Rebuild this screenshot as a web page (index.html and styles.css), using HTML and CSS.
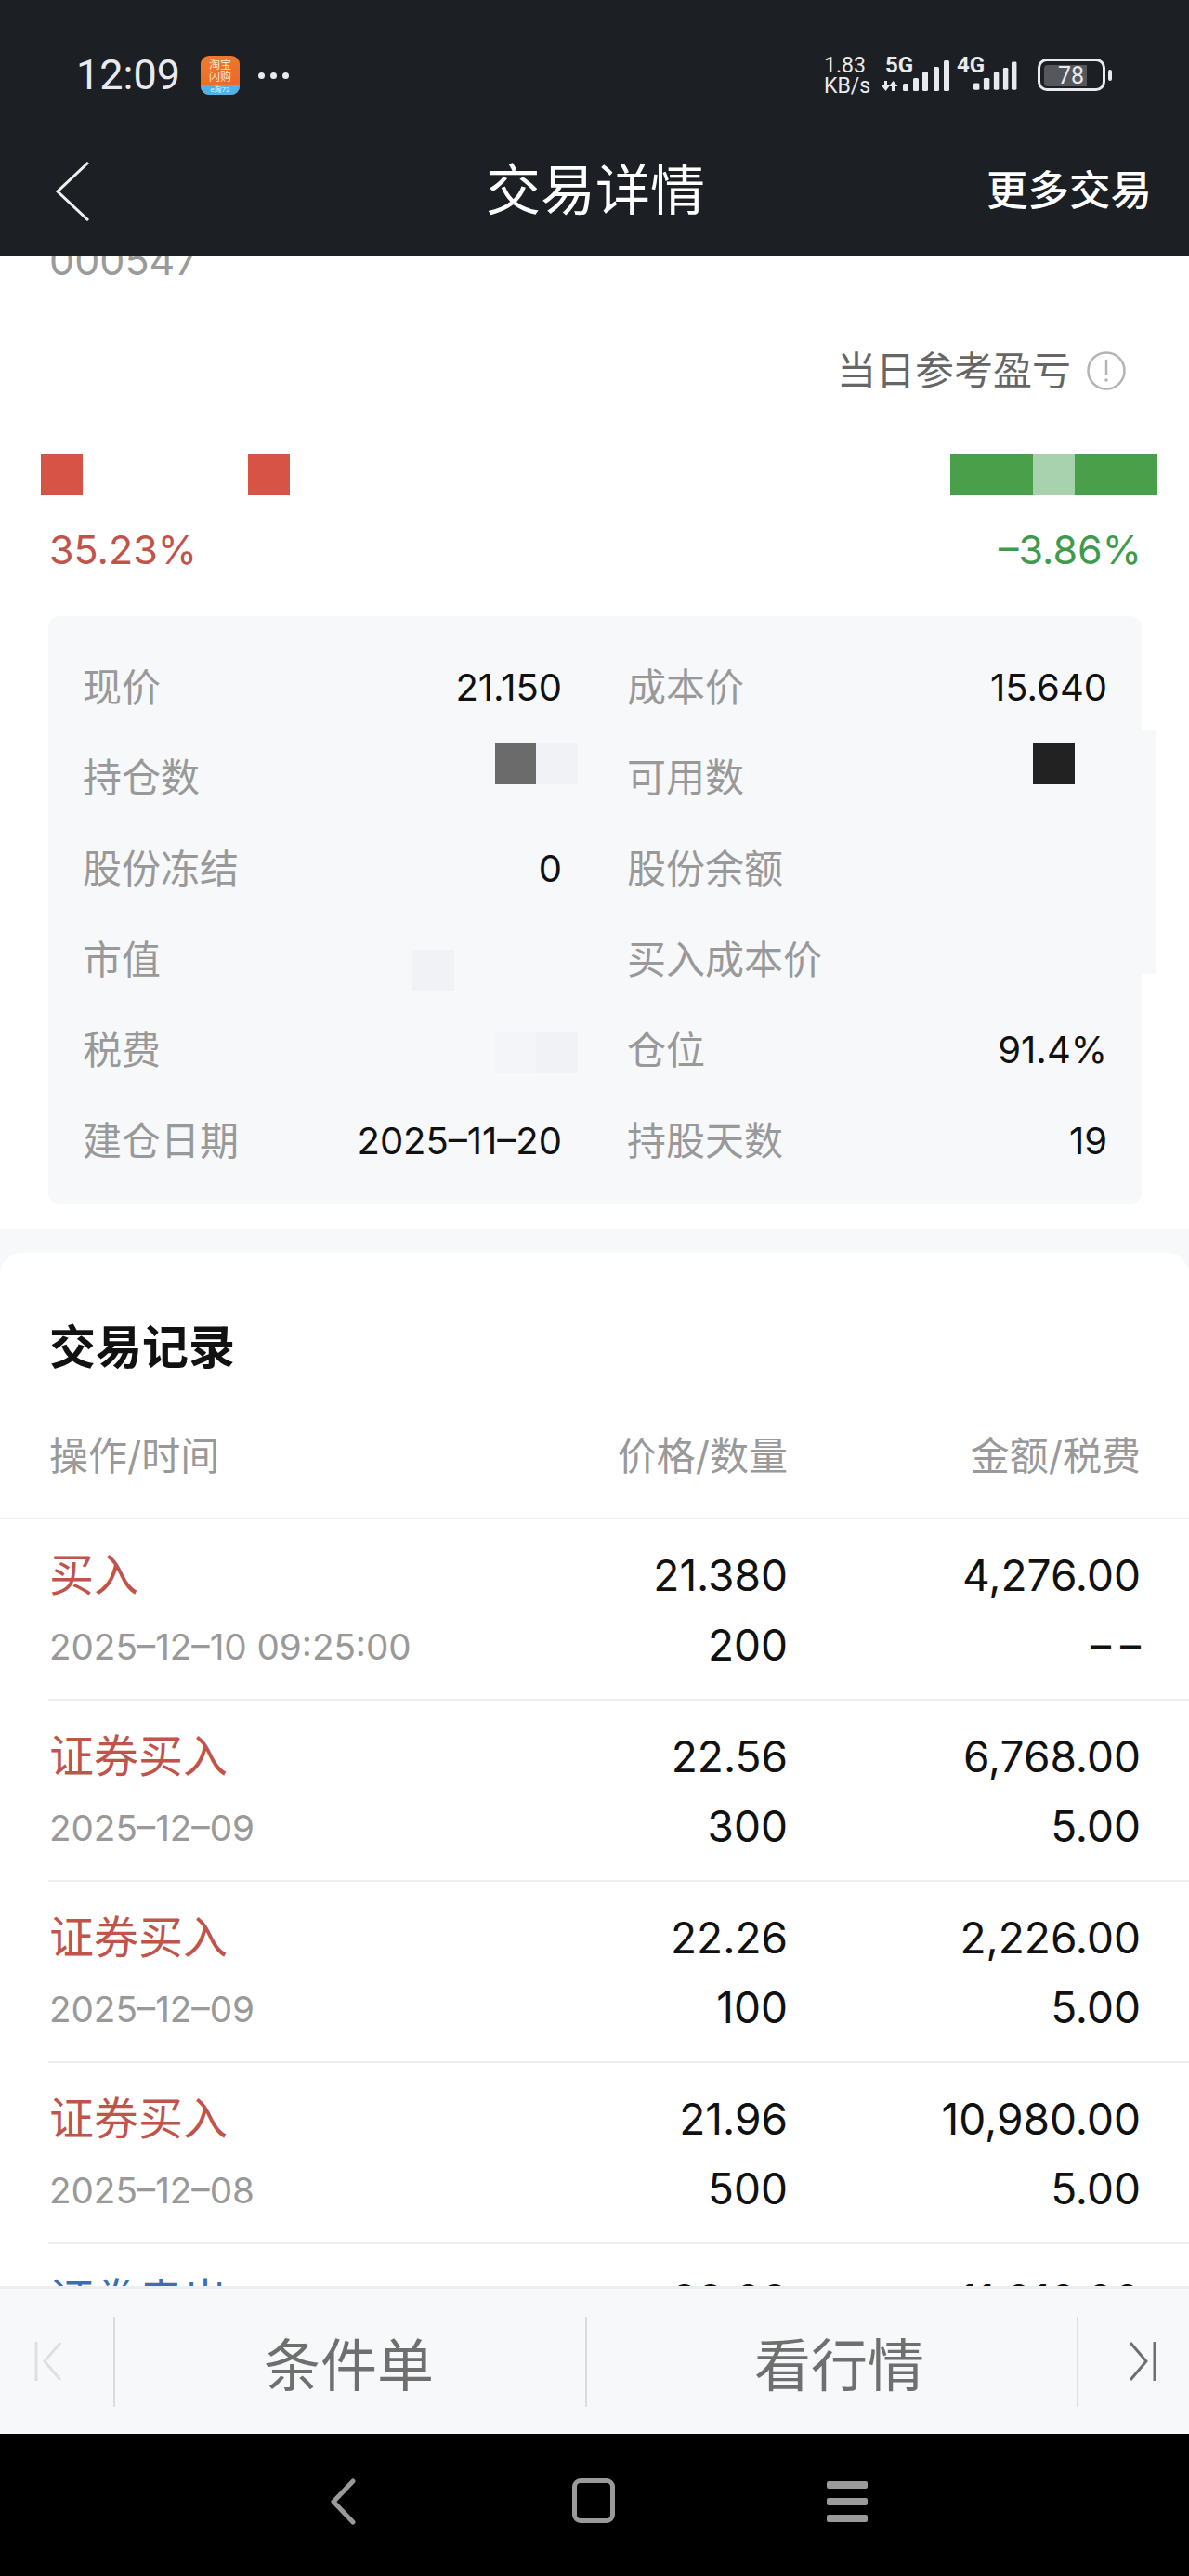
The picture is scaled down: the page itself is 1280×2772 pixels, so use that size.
FILE: index.html
```html
<!DOCTYPE html>
<html lang="zh-CN">
<head>
  <meta charset="UTF-8" />
  <meta name="viewport" content="width=device-width, initial-scale=1.0" />
  <title>交易详情</title>
  <link rel="stylesheet" href="styles.css">
</head>
<body>
  <header class="top-bar">
    <div class="status-bar">
      <span class="clock">12:09</span>
      <div class="app-badge">
        <div class="app-badge-name">淘宝<br />闪购</div>
        <div class="app-badge-foot">e淘72</div>
      </div>
      <div class="status-dots"><i></i><i></i><i></i></div>
      <div class="net-speed">1.83<br />KB/s</div>
      <div class="signal signal-5g">
        <span class="signal-name">5G</span>
        <svg width="75" height="36" viewBox="0 0 75 36">
          <path d="M3 22h3v5h3l-4.500 6L0 27h3zM11 33h3v-5h3.500l-5-6-4.500 6H11z" fill="#e8eaed" />
          <rect x="23" y="25" width="6" height="8" rx="1.5" fill="#e8eaed" />
          <rect x="34" y="19" width="6" height="14" rx="1.5" fill="#e8eaed" />
          <rect x="44" y="12" width="6" height="21" rx="1.5" fill="#e8eaed" />
          <rect x="56" y="7" width="6" height="26" rx="1.5" fill="#e8eaed" />
          <rect x="67" y="0" width="6" height="33" rx="1.5" fill="#e8eaed" />
        </svg>
      </div>
      <div class="signal signal-4g">
        <span class="signal-name">4G</span>
        <svg width="56" height="36" viewBox="0 0 56 36">
          <rect x="0" y="25" width="7" height="8" rx="1.5" fill="#e8eaed" />
          <rect x="12" y="19" width="7" height="14" rx="1.5" fill="#e8eaed" />
          <rect x="24" y="12" width="6" height="21" rx="1.5" fill="#e8eaed" />
          <rect x="35" y="7" width="6" height="26" rx="1.5" fill="#e8eaed" />
          <rect x="45" y="0" width="6" height="33" rx="1.5" fill="#e8eaed" />
        </svg>
      </div>
      <div class="battery">
        <div class="battery-body"><span class="battery-level">78</span></div>
        <div class="battery-tip"></div>
      </div>
    </div>
    <nav class="title-bar">
      <svg class="back-icon" width="37" height="64" viewBox="0 0 37 64">
        <path d="M35 1L2 32l33 31" fill="none" stroke="#f0f0f0" stroke-width="3" />
      </svg>
      <h1 class="page-title">交易详情</h1>
      <a class="more-link">更多交易</a>
    </nav>
  </header>

  <main class="scroll-area">
    <section class="summary">
      <div class="stock-code">000547</div>
      <div class="daily-ref">
        <span>当日参考盈亏</span>
        <svg width="42" height="42" viewBox="0 0 42 42">
          <circle cx="21" cy="21" r="19.5" fill="none" stroke="#b4b4b4" stroke-width="2.5" />
          <path d="M21 9v16" stroke="#b4b4b4" stroke-width="2.5" />
          <circle cx="21" cy="31" r="1.8" fill="#b4b4b4" />
        </svg>
      </div>
      <div class="mosaic-row">
        <div class="mosaic">
          <i class="cell cell-red"></i><i class="cell"></i><i class="cell"></i><i class="cell"></i><i class="cell"></i><i class="cell cell-red"></i>
        </div>
        <div class="mosaic">
          <i class="cell cell-green"></i><i class="cell cell-green"></i><i class="cell cell-pale"></i><i class="cell cell-green"></i><i class="cell cell-green"></i>
        </div>
      </div>
      <div class="percent-row">
        <span class="up">35.23%</span>
        <span class="down">–3.86%</span>
      </div>

      <div class="position-card">
        <div class="card-edge"></div>
        <div class="field"><span class="field-label">现价</span><span class="field-value">21.150</span></div>
        <div class="field"><span class="field-label">成本价</span><span class="field-value">15.640</span></div>
        <div class="field">
          <span class="field-label">持仓数</span>
          <span class="blur blur-qty"><i class="cell cell-grey"></i><i class="cell cell-faint"></i></span>
        </div>
        <div class="field">
          <span class="field-label">可用数</span>
          <span class="blur blur-avail"><i class="cell cell-dark"></i></span>
        </div>
        <div class="field"><span class="field-label">股份冻结</span><span class="field-value">0</span></div>
        <div class="field"><span class="field-label">股份余额</span></div>
        <div class="field">
          <span class="field-label">市值</span>
          <span class="blur blur-value"><i class="cell cell-faint"></i></span>
        </div>
        <div class="field"><span class="field-label">买入成本价</span></div>
        <div class="field">
          <span class="field-label">税费</span>
          <span class="blur blur-tax"><i class="cell cell-fainter"></i><i class="cell cell-faint"></i></span>
        </div>
        <div class="field"><span class="field-label">仓位</span><span class="field-value">91.4%</span></div>
        <div class="field"><span class="field-label">建仓日期</span><span class="field-value">2025–11–20</span></div>
        <div class="field"><span class="field-label">持股天数</span><span class="field-value">19</span></div>
      </div>
    </section>

    <section class="records">
      <h2 class="records-title">交易记录</h2>
      <div class="records-head">
        <span>操作/时间</span>
        <span class="num">价格/数量</span>
        <span class="num">金额/税费</span>
      </div>

      <div class="trade first">
        <span class="trade-type up">买入</span>
        <span class="num">21.380</span>
        <span class="num">4,276.00</span>
        <span class="trade-time">2025–12–10 09:25:00</span>
        <span class="num">200</span>
        <span class="num no-fee">––</span>
      </div>
      <div class="trade">
        <span class="trade-type up">证券买入</span>
        <span class="num">22.56</span>
        <span class="num">6,768.00</span>
        <span class="trade-time">2025–12–09</span>
        <span class="num">300</span>
        <span class="num">5.00</span>
      </div>
      <div class="trade">
        <span class="trade-type up">证券买入</span>
        <span class="num">22.26</span>
        <span class="num">2,226.00</span>
        <span class="trade-time">2025–12–09</span>
        <span class="num">100</span>
        <span class="num">5.00</span>
      </div>
      <div class="trade">
        <span class="trade-type up">证券买入</span>
        <span class="num">21.96</span>
        <span class="num">10,980.00</span>
        <span class="trade-time">2025–12–08</span>
        <span class="num">500</span>
        <span class="num">5.00</span>
      </div>
      <div class="trade">
        <span class="trade-type sell">证券卖出</span>
        <span class="num">22.02</span>
        <span class="num">11,010.00</span>
        <span class="trade-time">2025–12–08</span>
        <span class="num">500</span>
        <span class="num">5.00</span>
      </div>
    </section>
  </main>

  <div class="action-bar">
    <div class="action action-prev">
      <svg width="30" height="44" viewBox="0 0 30 44">
        <path d="M2 1v42" stroke="#dedfe2" stroke-width="3" />
        <path d="M28 2L11 22l17 20" fill="none" stroke="#dedfe2" stroke-width="3" />
      </svg>
    </div>
    <div class="action action-main action-order">条件单</div>
    <div class="action action-main action-quote">看行情</div>
    <div class="action action-next">
      <svg width="30" height="44" viewBox="0 0 30 44">
        <path d="M28 1v42" stroke="#6f6f6f" stroke-width="3" />
        <path d="M2 2l17 20L2 42" fill="none" stroke="#6f6f6f" stroke-width="3" />
      </svg>
    </div>
  </div>

  <footer class="system-nav">
    <svg class="sys-back" width="30" height="50" viewBox="0 0 30 50">
      <path d="M26 3L5 25l21 22" fill="none" stroke="#9a9a9a" stroke-width="5" stroke-linecap="round" stroke-linejoin="round" />
    </svg>
    <div class="sys-home"></div>
    <div class="sys-menu"><i></i><i></i><i></i></div>
  </footer>
</body>
</html>
```

FILE: styles.css
```css
* {
  box-sizing: border-box;
}
body {
  margin: 0;
  width: 1280px;
  height: 2772px;
  overflow: hidden;
  display: flex;
  flex-direction: column;
  background: #fff;
  color: #111;
  font-family: Inter, "Noto Sans CJK SC", sans-serif;
}
i {
  display: block;
}

/* top */
.top-bar {
  position: relative;
  z-index: 2;
  height: 275px;
  flex: none;
  background: #1c1f24;
  color: #e8eaed;
  font-family: Roboto, "Noto Sans CJK SC", sans-serif;
}
.status-bar {
  height: 150px;
  display: flex;
  align-items: flex-start;
  padding: 60px 0 0 82px;
}
.clock {
  width: 134px;
  font-size: 45px;
  line-height: 42px;
}
.app-badge {
  width: 42px;
  height: 42px;
  border-radius: 9px;
  overflow: hidden;
  background: linear-gradient(160deg, #ef7d2c, #e8622a);
  color: #fde6c8;
}
.app-badge-name {
  height: 31px;
  padding-top: 4px;
  font-size: 12px;
  line-height: 13px;
  text-align: center;
}
.app-badge-foot {
  height: 11px;
  border-top: 1px solid #fff;
  background: #4fb0ea;
  color: #e4f3fd;
  font-size: 8px;
  line-height: 10px;
  text-align: center;
}
.status-dots {
  display: flex;
  gap: 6px;
  margin: 18px 0 0 20px;
  width: 34px;
}
.status-dots i {
  width: 7px;
  height: 7px;
  border-radius: 50%;
  background: #e8eaed;
}
.net-speed {
  margin-left: 575px;
  width: 62px;
  font-size: 23px;
  line-height: 22px;
}
.signal {
  position: relative;
  display: flex;
}
.signal svg {
  display: block;
  margin-top: 5px;
}
.signal-5g {
  width: 81px;
  height: 42px;
}
.signal-4g {
  width: 69px;
  height: 42px;
  padding-left: 18px;
}
.signal-name {
  position: absolute;
  left: 4px;
  top: -1px;
  font-size: 24px;
  line-height: 22px;
  font-weight: 700;
}
.signal-4g .signal-name {
  left: 0;
}
.battery {
  display: flex;
  align-items: center;
  margin: 3px 0 0 18px;
}
.battery-body {
  width: 73px;
  height: 35px;
  padding: 4px;
  border: 3px solid #e8eaed;
  border-radius: 10px;
}
.battery-level {
  display: block;
  width: 46px;
  height: 23px;
  padding-right: 3px;
  background: #55575c;
  border-radius: 4px 0 0 4px;
  color: #e8eaed;
  font-size: 25px;
  line-height: 23px;
  text-align: right;
}
.battery-tip {
  width: 4px;
  height: 12px;
  margin-left: 3px;
  border-radius: 2px;
  background: #e8eaed;
}
.title-bar {
  height: 125px;
  display: grid;
  grid-template-columns: 1fr auto 1fr;
  align-items: center;
  padding: 0 40px 13px 42px;
  color: #fff;
}
.back-icon {
  display: block;
  margin-left: 18px;
}
.page-title {
  margin: 0;
  font-size: 59px;
  font-weight: 400;
  line-height: 70px;
}
.more-link {
  justify-self: end;
  font-size: 44.5px;
  font-weight: 500;
  line-height: 60px;
}

/* summary */
.scroll-area {
  flex: 1;
  min-height: 0;
  overflow: hidden;
  background: #f7f8fa;
}
.summary {
  height: 1047px;
  padding-top: 1px;
  background: #fff;
}
.stock-code {
  margin: -21px 0 0 53px;
  height: 50px;
  color: #9a9a9a;
  font-size: 43px;
  line-height: 50px;
}
.daily-ref {
  display: flex;
  justify-content: flex-end;
  align-items: center;
  gap: 17px;
  height: 50px;
  margin-top: 69px;
  padding-right: 68px;
  color: #666;
  font-size: 42px;
  line-height: 50px;
}
.daily-ref svg {
  display: block;
}
.mosaic-row {
  display: flex;
  justify-content: space-between;
  margin-top: 65px;
  padding: 0 34px 0 44px;
}
.mosaic {
  display: flex;
}
.cell {
  width: 44.6px;
  height: 44px;
}
.cell-red {
  background: #d65345;
}
.cell-green {
  background: #4a9f4a;
}
.cell-pale {
  background: #a8d2ae;
}
.cell-grey {
  background: #6b6b6b;
}
.cell-dark {
  background: #222;
}
.cell-faint {
  background: #f1f2f5;
}
.cell-fainter {
  background: #f4f5f8;
}
.percent-row {
  display: flex;
  justify-content: space-between;
  height: 40px;
  margin-top: 42px;
  padding: 0 51px 0 53px;
  overflow: hidden;
  font-size: 43px;
  line-height: 32px;
}
.up {
  color: #c0544a;
}
.down {
  color: #3f9a4e;
}
.sell {
  color: #3b6fb5;
}

/* position card */
.position-card {
  position: relative;
  display: grid;
  grid-template-columns: 516px 517px;
  grid-auto-rows: 97.6px;
  column-gap: 70px;
  width: 1177px;
  height: 633px;
  margin: 48px 0 0 52px;
  padding: 28px 37px 0 37px;
  border-radius: 12px;
  background: #f7f8fa;
}
.card-edge {
  position: absolute;
  right: -16px;
  top: 123px;
  width: 16px;
  height: 262px;
  background: #f7f8fa;
}
.field {
  display: flex;
  justify-content: space-between;
  align-items: center;
}
.field-label {
  color: #999;
  font-size: 42px;
  line-height: 50px;
}
.field-value {
  color: #111;
  font-size: 40px;
  line-height: 50px;
}
.blur {
  display: flex;
}
.blur-qty {
  margin: 0 -17px 30px 0;
}
.blur-avail {
  margin: 0 35px 30px 0;
}
.blur-value {
  margin: 22px 116px 0 0;
}
.blur-tax {
  margin: 6px -17px 0 0;
}

/* records */
.records {
  margin-top: 26px;
  padding-top: 72px;
  border-radius: 24px 24px 0 0;
  background: #fff;
}
.records-title {
  margin: 0 0 0 53px;
  font-size: 50px;
  font-weight: 700;
  line-height: 60px;
}
.records-head {
  display: grid;
  grid-template-columns: 1fr 300px 380px;
  height: 93px;
  margin-top: 62px;
  padding: 0 52px 0 53px;
  border-bottom: 2px solid #eceef0;
  color: #999;
  font-size: 42px;
  line-height: 50px;
}
.num {
  text-align: right;
}
.trade {
  display: grid;
  grid-template-columns: 1fr 300px 380px;
  grid-template-rows: 50px 50px;
  row-gap: 25px;
  height: 195px;
  margin-left: 52px;
  padding: 35px 52px 0 1px;
  border-top: 2px solid #eceef0;
  font-size: 46px;
  line-height: 50px;
}
.trade.first {
  height: 193px;
  border-top: none;
}
.trade-type {
  font-size: 48px;
}
.trade-time {
  padding-top: 2px;
  color: #999;
  font-size: 38.6px;
}
.no-fee {
  margin-right: -10px;
  letter-spacing: 10px;
  font-size: 44px;
  font-weight: 600;
}

/* bottom */
.action-bar {
  position: relative;
  z-index: 2;
  flex: none;
  height: 159px;
  display: flex;
  align-items: center;
  border-top: 3px solid #eceef0;
  background: #f7f8fa;
  color: #6f6f6f;
  font-size: 61px;
}
.action {
  height: 97px;
  display: flex;
  align-items: center;
  justify-content: center;
  flex: none;
}
.action svg {
  display: block;
}
.action-prev {
  width: 124px;
  padding-right: 19px;
  border-right: 2px solid #dcdde0;
}
.action-main {
  width: 508px;
  border-right: 2px solid #dcdde0;
}
.action-order {
  padding-right: 3px;
}
.action-quote {
  width: 529px;
  padding-left: 16px;
}
.action-next {
  width: 119px;
  padding-left: 54px;
  justify-content: flex-start;
}
.system-nav {
  flex: none;
  height: 153px;
  display: flex;
  align-items: flex-start;
  padding: 48px 0 0 354px;
  background: #000;
}
.sys-back {
  display: block;
}
.sys-home {
  width: 46px;
  height: 48px;
  margin-left: 232px;
  border: 5px solid #9a9a9a;
  border-radius: 9px;
}
.sys-menu {
  display: flex;
  flex-direction: column;
  gap: 10px;
  width: 44px;
  margin: 3px 0 0 228px;
}
.sys-menu i {
  height: 8px;
  border-radius: 2px;
  background: #9a9a9a;
}
```
